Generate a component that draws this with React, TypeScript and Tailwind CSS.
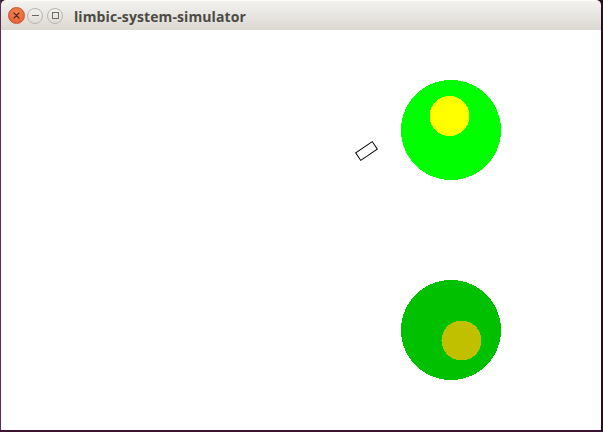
import React from 'react';

// simulator state drawn on the canvas (content coordinates, 600x400)
const EYES = [
  { cx: 450, cy: 100, r: 50, fill: '#00ff00', inner: { cx: 448.5, cy: 86, r: 20, fill: '#ffff00' } },
  { cx: 450, cy: 300, r: 50, fill: '#00c000', inner: { cx: 460.5, cy: 310.5, r: 20, fill: '#c0c000' } },
];

const AGENT = { x: 365.5, y: 121, w: 20, h: 9, angle: -34 };

const TitleButton = ({ kind }: { kind: 'close' | 'min' | 'max' }) => {
  if (kind === 'close') {
    return (
      <div className="w-[17px] h-[17px] rounded-full bg-[radial-gradient(circle_at_50%_35%,#f7875a,#e4572a)] border border-[#c8532e] flex items-center justify-center">
        <svg width="7" height="7" viewBox="0 0 7 7">
          <path d="M1 1L6 6M6 1L1 6" stroke="#5a2a1a" strokeWidth="1.3" strokeLinecap="round" />
        </svg>
      </div>
    );
  }
  return (
    <div className="w-[16px] h-[16px] rounded-full bg-[linear-gradient(#f4f3f1,#dedbd6)] border border-[#b9b5ae] flex items-center justify-center">
      {kind === 'min' ? (
        <div className="w-[7px] h-px bg-[#6f6b65]" />
      ) : (
        <div className="w-[7px] h-[7px] border border-[#6f6b65]" />
      )}
    </div>
  );
};

export default function App() {
  return (
    <div className="w-[603px] h-[432px] bg-[#2c0f1e] flex flex-col overflow-hidden">
      <div className="flex flex-1">
        <div className="w-px bg-[#5e2a55]" />
        <div className="w-[600px] flex flex-col">
          {/* title bar */}
          <div className="h-[30px] rounded-t-[5px] bg-[linear-gradient(#f3f2ef,#dcd8d2)] border-t border-[#fbfaf8] flex items-center pl-[7px] gap-[2px]">
            <TitleButton kind="close" />
            <TitleButton kind="min" />
            <div className="ml-[2px]">
              <TitleButton kind="max" />
            </div>
            <span className="ml-[9px] mt-px text-[14px] font-bold text-[#4c4a45] font-['Open_Sans',sans-serif] tracking-[0.1px]">
              limbic-system-simulator
            </span>
          </div>
          {/* canvas */}
          <div className="h-[400px] bg-white">
            <svg width="600" height="400" viewBox="0 0 600 400" shapeRendering="crispEdges">
              {EYES.map((e, i) => (
                <g key={i}>
                  <circle cx={e.cx} cy={e.cy} r={e.r} fill={e.fill} />
                  <circle cx={e.inner.cx} cy={e.inner.cy} r={e.inner.r} fill={e.inner.fill} />
                </g>
              ))}
              <rect
                x={AGENT.x - AGENT.w / 2}
                y={AGENT.y - AGENT.h / 2}
                width={AGENT.w}
                height={AGENT.h}
                fill="none"
                stroke="#000"
                strokeWidth="1"
                shapeRendering="auto"
                transform={`rotate(${AGENT.angle} ${AGENT.x} ${AGENT.y})`}
              />
            </svg>
          </div>
        </div>
      </div>
      <div className="h-[2px] bg-[#3a1532]" />
    </div>
  );
}
